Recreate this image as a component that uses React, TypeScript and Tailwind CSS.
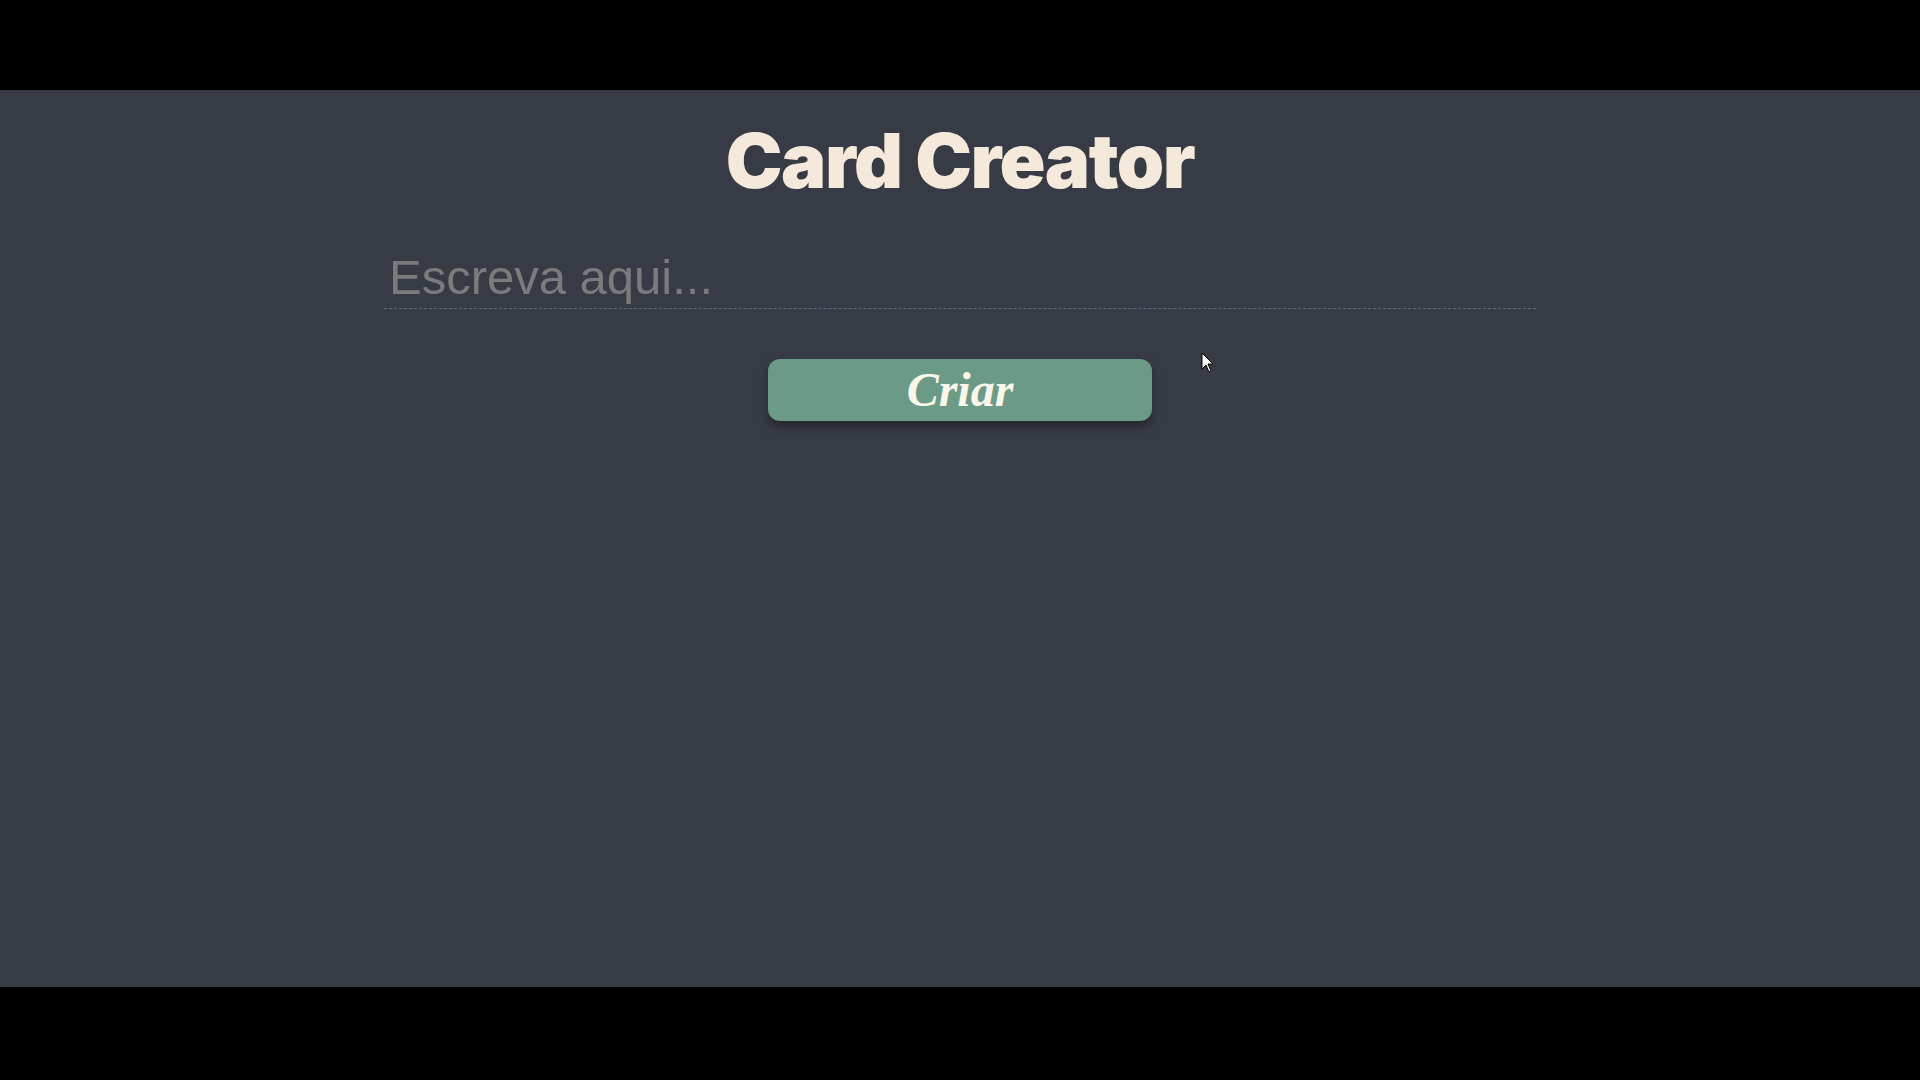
export default function App() {
  return (
    <div className="flex h-screen w-full flex-col bg-black">
      <div className="h-[90px] shrink-0" />
      <main className="relative flex h-[897px] w-full flex-col items-center bg-[#373b45]">
        <h1
          className="mt-[32px] text-[76px] font-black leading-none tracking-[-0.02em] text-[#f4e9da]"
          style={{ fontFamily: "Inter, 'Noto Sans', sans-serif" }}
        >
          Card Creator
        </h1>

        <input
          type="text"
          placeholder="Escreva aqui..."
          className="mt-[45px] w-[60%] border-0 border-b border-dashed border-[#5f6b80] bg-transparent px-[5px] pt-[4px] pb-0 text-[49px] leading-tight text-[#d8d8d8] outline-none placeholder:text-[#7b7b7d]"
          style={{ fontFamily: "'Liberation Sans', Arial, sans-serif" }}
        />

        <button
          type="button"
          className="mt-[50px] h-[62px] w-[20%] rounded-[12px] bg-[#6b9b86] text-[48px] font-bold italic leading-none text-[#fbf6ea] shadow-[0_6px_10px_rgba(0,0,0,0.35)]"
          style={{ fontFamily: "'Liberation Serif', 'Times New Roman', serif" }}
        >
          Criar
        </button>

        {/* mouse pointer captured in the screenshot */}
        <svg
          className="absolute left-[1201px] top-[262px]"
          width="14"
          height="22"
          viewBox="0 0 14 22"
        >
          <path d="M1 1 L1 17 L5 13 L8 20 L10 19 L7 12 L12 12 Z" fill="#fff" stroke="#000" strokeWidth="1" />
        </svg>
      </main>
      <div className="flex-1" />
    </div>
  );
}
